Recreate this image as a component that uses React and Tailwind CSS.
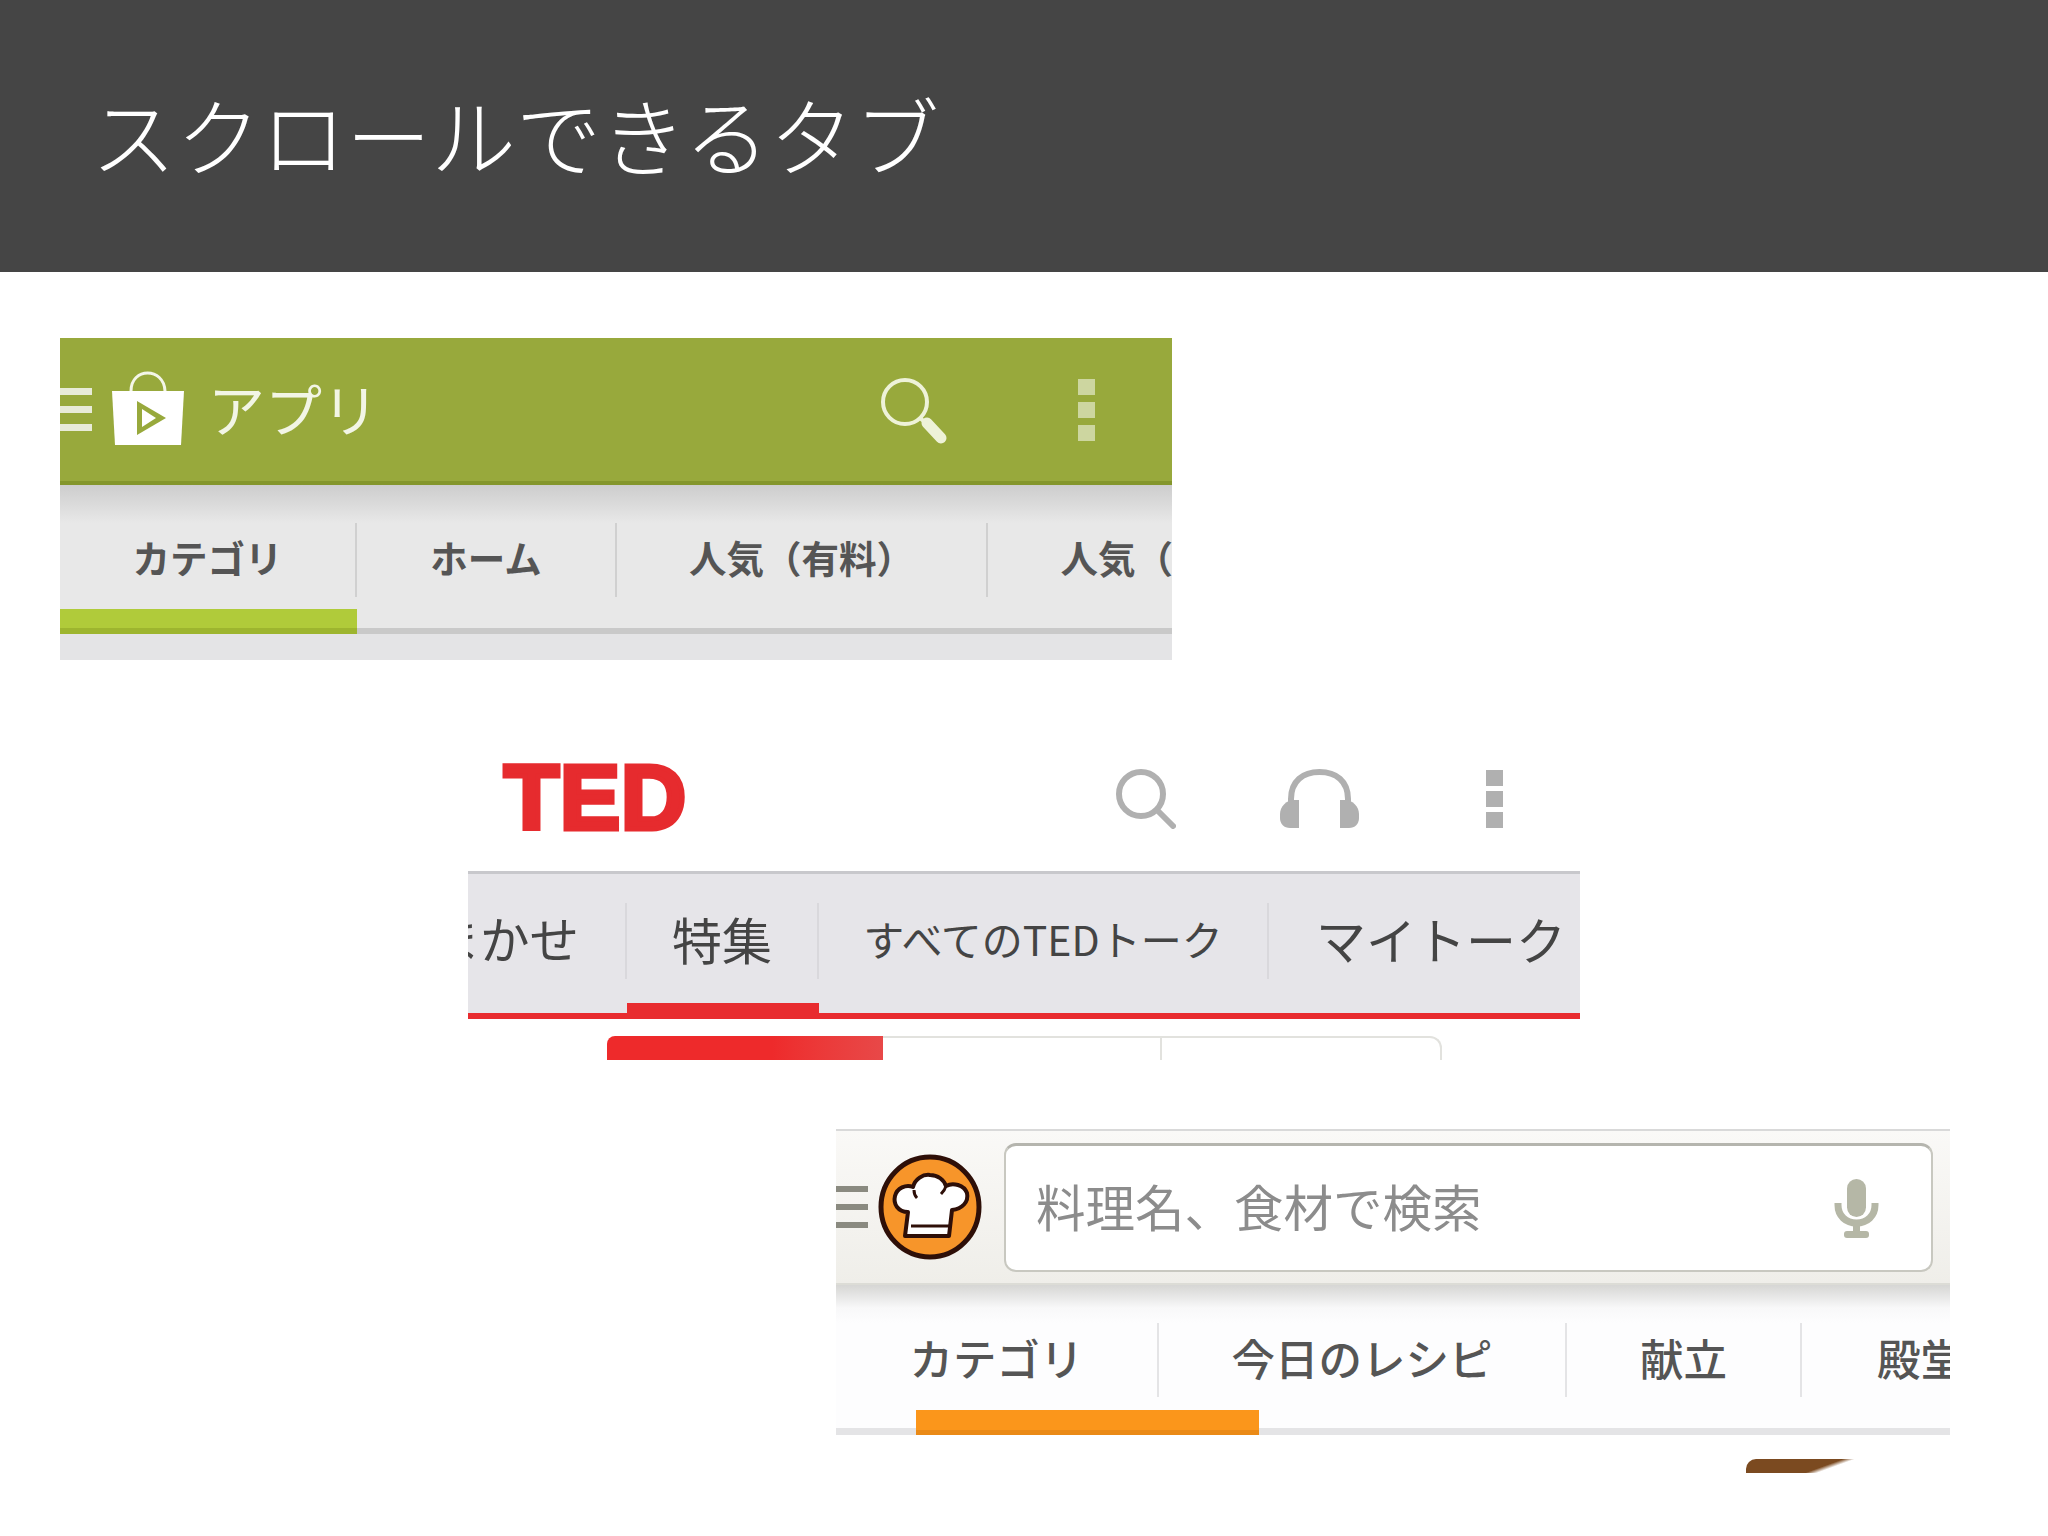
import React from 'react';

const PlayBag = () => (
  <svg width="72" height="74" viewBox="0 0 72 74" className="ml-[20px] mt-[-4px] shrink-0">
    <path d="M19 20 C19 -4 52 -4 53 20" fill="none" stroke="#f4f6e8" strokeWidth="3" />
    <path d="M0 20 H72 L69 74 H3 Z" fill="#ffffff" />
    <path d="M25 30 L54 47 L25 64 Z" fill="#98a93c" />
    <path d="M30 38 L44 47 L30 56 Z" fill="#ffffff" />
  </svg>
);

const GreenSearch = () => (
  <svg width="68" height="68" viewBox="0 0 68 68" className="shrink-0">
    <circle cx="25" cy="25" r="22" fill="none" stroke="#eef2d8" strokeWidth="4" />
    <path d="M40 41 L47 47" stroke="#eef2d8" strokeWidth="4" />
    <path d="M47 46 L61 61" stroke="#eef2d8" strokeWidth="11" strokeLinecap="round" />
  </svg>
);

const Dots = ({ color, gap }) => (
  <div className={`flex flex-col shrink-0 w-[17px] ${gap}`}>
    <div className={`h-[16px] ${color}`} />
    <div className={`h-[16px] ${color}`} />
    <div className={`h-[16px] ${color}`} />
  </div>
);

const GraySearch = () => (
  <svg width="60" height="60" viewBox="0 0 60 60" className="shrink-0">
    <circle cx="25" cy="25" r="22" fill="none" stroke="#b0b0b0" strokeWidth="6" />
    <path d="M41 41 L57 57" stroke="#b0b0b0" strokeWidth="6" strokeLinecap="round" />
  </svg>
);

const Headphones = () => (
  <svg width="79" height="60" viewBox="0 0 79 60" className="shrink-0" fill="#b0b0b0">
    <path d="M11 34 V30 C11 12 23 3 39.5 3 C56 3 68 12 68 30 V34" fill="none" stroke="#b0b0b0" strokeWidth="6" />
    <path d="M19 31 H14 C6 31 0 38 0 45 V49 C0 55 4 59 10 59 H19 Z" />
    <path d="M60 31 H65 C73 31 79 38 79 45 V49 C79 55 75 59 69 59 H60 Z" />
  </svg>
);

const ChefLogo = () => (
  <svg width="104" height="106" viewBox="0 0 104 106" className="shrink-0 ml-[10px]">
    <ellipse cx="52" cy="53" rx="49" ry="50" fill="#f7952a" stroke="#2e0f08" strokeWidth="5" />
    <path
      d="M30 58 C20 58 15 50 17 42 C19 34 28 30 35 33 C37 25 45 20 52 21 C60 21 66 26 68 32 C75 28 86 31 89 39 C91 48 84 55 74 56 L71 82 L27 82 Z"
      fill="#ffffff"
      stroke="#2e0f08"
      strokeWidth="4"
      strokeLinejoin="round"
    />
    <path d="M33 72 H71" stroke="#2e0f08" strokeWidth="3" />
    <path d="M36 36 C36 39 37 42 39 44 M68 32 C67 36 65 38 63 40" fill="none" stroke="#2e0f08" strokeWidth="3" />
  </svg>
);

const Mic = () => (
  <svg width="45" height="59" viewBox="0 0 45 59" className="shrink-0" fill="#b5b7a6">
    <rect x="13" y="0" width="19" height="38" rx="9.5" />
    <path d="M4 24 V26 C4 37 12 44 22.5 44 C33 44 41 37 41 26 V24" fill="none" stroke="#b5b7a6" strokeWidth="7" />
    <rect x="19" y="44" width="7" height="10" />
    <rect x="10" y="52" width="25" height="7" rx="3" />
  </svg>
);

const Bars = ({ color, gapClass, barClass }) => (
  <div className={`flex flex-col w-[32px] shrink-0 ${gapClass}`}>
    <div className={`${barClass} ${color}`} />
    <div className={`${barClass} ${color}`} />
    <div className={`${barClass} ${color}`} />
  </div>
);

const Tab = ({ label, className, textClass = '' }) => (
  <div className={`flex items-center shrink-0 whitespace-nowrap ${className}`}>
    <span className={`mt-[-5px] ${textClass}`}>{label}</span>
  </div>
);

const PlayStorePanel = () => (
  <section className="ml-[60px] mt-[66px] w-[1112px] overflow-hidden">
    <div className="h-[147px] bg-[#98a93c] border-b-[4px] border-[#84962c] flex items-center">
      <Bars color="bg-[#e8ebd8]" gapClass="gap-[11px]" barClass="h-[7px]" />
      <PlayBag />
      <span className="ml-[24px] mt-[-4px] text-[57px] leading-none text-[#f2f5e5]">アプリ</span>
      <div className="ml-auto mt-[2px]"><GreenSearch /></div>
      <div className="ml-[130px] mr-[77px]"><Dots color="bg-[#cdd6a0]" gap="gap-[7px]" /></div>
    </div>
    <div className="h-[38px] bg-gradient-to-b from-[#cdcdcd] to-[#e8e8e8]" />
    <div className="bg-[#e8e8e8]">
      <div className="flex h-[74px] text-[37.5px] font-semibold text-[#555555]">
        <Tab label="カテゴリ" className="w-[297px] justify-center border-r-2 border-[#d0d0d0]" />
        <Tab label="ホーム" className="w-[260px] justify-center border-r-2 border-[#d0d0d0]" />
        <Tab label="人気（有料）" className="w-[371px] justify-center border-r-2 border-[#d0d0d0]" />
        <Tab label="人気（無料）" className="w-[370px] justify-center" />
      </div>
      <div className="h-[12px]" />
      <div className="flex items-end h-[25px]">
        <div className="w-[297px] h-[25px] bg-[#b0cb3a] border-b-[6px] border-[#9db52f]" />
        <div className="flex-1 h-[6px] bg-[#c9c9c9]" />
      </div>
    </div>
    <div className="h-[26px] bg-[#e4e4e6]" />
  </section>
);

const TedPanel = () => (
  <section className="ml-[468px] mt-[78px] w-[1112px] overflow-hidden">
    <div className="h-[133px] flex items-center bg-white">
      <span className="ml-[36px] mt-[-13px] font-['Liberation_Sans',sans-serif] font-bold text-[90px] leading-none tracking-[1px] text-[#e62b2e] [-webkit-text-stroke:5px_#e62b2e]">
        TED
      </span>
      <div className="ml-[429px] mt-[-12px]"><GraySearch /></div>
      <div className="ml-[104px] mt-[-12px]"><Headphones /></div>
      <div className="ml-[127px] mt-[-12px]"><Dots color="bg-[#b0b0b0]" gap="gap-[5px]" /></div>
    </div>
    <div className="bg-[#e6e5e9] border-t-[3px] border-[#c8c8cc] pt-[29px]">
      <div className="flex h-[76px] text-[#444444]">
        <Tab label="おまかせ" className="w-[159px] justify-end pr-[46px] text-[49.5px] border-r-2 border-[#d9d8dc]" />
        <Tab label="特集" className="w-[192px] justify-center text-[50px] border-r-2 border-[#d9d8dc]" />
        <Tab label="すべてのTEDトーク" className="w-[450px] justify-center text-[41px] border-r-2 border-[#d9d8dc]" />
        <Tab label="マイトーク" className="pl-[47px] text-[50px]" />
      </div>
      <div className="h-[24px]" />
      <div className="flex items-end h-[16px]">
        <div className="w-[159px] h-[6px] bg-[#e82c2f]" />
        <div className="w-[192px] h-[16px] bg-[#e82c2f]" />
        <div className="flex-1 h-[6px] bg-[#e82c2f]" />
      </div>
    </div>
    <div className="mt-[17px] ml-[139px] w-[835px] h-[24px] flex">
      <div className="w-[276px] rounded-tl-[8px] bg-gradient-to-r from-[#ee2a2b] from-60% to-[#e84848]" />
      <div className="w-[279px] border-t-2 border-r-2 border-[#e2e2de]" />
      <div className="flex-1 border-t-2 border-r-2 border-[#e2e2de] rounded-tr-[12px]" />
    </div>
  </section>
);

const CookpadPanel = () => (
  <section className="ml-[836px] mt-[69px] w-[1114px] overflow-hidden">
    <div className="h-[156px] bg-gradient-to-b from-[#faf9f7] to-[#efeee9] border-t-2 border-[#d9d9d9] border-b-2 border-b-[#dcdcd6] flex items-center">
      <Bars color="bg-[#8a8a80]" gapClass="gap-[12px]" barClass="h-[6px]" />
      <ChefLogo />
      <div className="ml-[22px] w-[929px] h-[129px] bg-white rounded-[12px] border-2 border-[#c8c8c0] border-t-[3px] border-t-[#b5b5ae] flex items-center pl-[30px] pr-[52px]">
        <span className="text-[49.5px] text-[#8c8c8c] mt-[-2px]">料理名、食材で検索</span>
        <div className="ml-auto mt-[2px]"><Mic /></div>
      </div>
    </div>
    <div className="h-[38px] bg-gradient-to-b from-[#d6d6d4] via-[#f8f8f9] via-60% to-[#fdfdfe]" />
    <div className="bg-[#fdfdfe]">
      <div className="flex h-[74px] text-[43.5px] font-medium text-[#555555]">
        <Tab label="カテゴリ" className="w-[323px] justify-center border-r-2 border-[#e4e4e6]" />
        <Tab label="今日のレシピ" className="w-[408px] justify-center border-r-2 border-[#e4e4e6]" />
        <Tab label="献立" className="w-[235px] justify-center border-r-2 border-[#e4e4e6]" />
        <Tab label="殿堂入り" className="pl-[75px]" />
      </div>
      <div className="h-[13px]" />
      <div className="flex items-end h-[25px]">
        <div className="w-[80px] h-[7px] bg-[#e4e4e6]" />
        <div className="w-[343px] h-[25px] bg-[#fb961b] border-b-[5px] border-[#ea8a17]" />
        <div className="flex-1 h-[7px] bg-[#e4e4e6]" />
      </div>
    </div>
    <div className="mt-[24px] ml-[910px] w-[204px] h-[14px] flex">
      <div className="w-[118px] rounded-tl-[10px] bg-[linear-gradient(160deg,#7b4a20_62%,#ffffff_70%)]" />
    </div>
  </section>
);

const App = () => (
  <div className="min-h-[1536px] bg-white font-['Noto_Sans_CJK_JP',sans-serif]">
    <header className="h-[272px] bg-[#454545] flex items-center pl-[91px]">
      <h1 className="text-[85px] leading-none font-light text-white mt-[-8px]">スクロールできるタブ</h1>
    </header>
    <PlayStorePanel />
    <TedPanel />
    <CookpadPanel />
  </div>
);

export default App;
